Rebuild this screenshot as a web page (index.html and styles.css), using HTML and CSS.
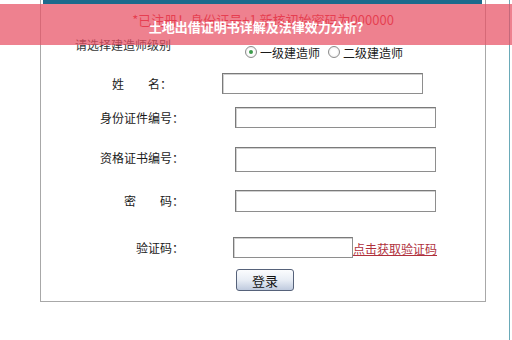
FILE: index.html
```html
<!DOCTYPE html>
<html lang="zh-CN">
<head>
<meta charset="utf-8">
<title>土地出借证明书详解及法律效力分析?</title>
<link rel="stylesheet" href="styles.css">
</head>
<body>
<div class="page">
  <div class="frame">
    <div class="topbar"></div>
    <div class="notice">*已注册！身份证号+1 新核初始密码为000000</div>
    <div class="level-row">
      <span class="level-label">请选择建造师级别</span>
      <div class="radios">
        <span class="radio checked"></span><span class="radio-text">一级建造师</span>
        <span class="radio"></span><span class="radio-text">二级建造师</span>
      </div>
    </div>
    <div class="row row-name">
      <span class="label label-name">姓　　名：</span>
      <span class="field field-name"></span>
    </div>
    <div class="row row-id">
      <span class="label">身份证件编号：</span>
      <span class="field"></span>
    </div>
    <div class="row row-cert">
      <span class="label label-cert">资格证书编号：</span>
      <span class="field field-cert"></span>
    </div>
    <div class="row row-pwd">
      <span class="label">密　　码：</span>
      <span class="field field-pwd"></span>
    </div>
    <div class="row row-code">
      <span class="label">验证码：</span>
      <span class="field field-code"></span>
      <a class="code-link" href="#">点击获取验证码</a>
    </div>
    <div class="row row-btn">
      <span class="btn">登录</span>
    </div>
  </div>
  <div class="banner">
    <span class="banner-title">土地出借证明书详解及法律效力分析?</span>
  </div>
</div>
</body>
</html>
```

FILE: styles.css
```css
html, body {
  margin: 0;
  padding: 0;
  background: #ffffff;
}

body {
  width: 512px;
  height: 340px;
  overflow: hidden;
  font-family: "Noto Sans CJK SC", "Noto Sans", sans-serif;
  font-size: 12px;
  color: #1a1a1a;
}

.page {
  position: relative;
  width: 509px;
  height: 340px;
  border-right: 1px solid #6aaab8;
}

.frame {
  margin-left: 40px;
  width: 446px;
  box-sizing: border-box;
  border-left: 1px solid #a8a8a8;
  border-right: 1px solid #a8a8a8;
  border-bottom: 1px solid #a8a8a8;
  padding-bottom: 10px;
}

.topbar {
  height: 4px;
  margin: 0 3px 0 2px;
  background: #1c6a8c;
}

.notice {
  margin-top: 8px;
  height: 16px;
  line-height: 16px;
  text-align: center;
  font-size: 13px;
  color: #e01020;
}

.level-row {
  display: flex;
  align-items: flex-start;
  margin-top: 9px;
  height: 23px;
}

.level-label {
  margin-left: 34px;
  width: 170px;
  flex: none;
  line-height: 16px;
  color: #333333;
}

.radios {
  display: flex;
  align-items: center;
  margin-top: 7px;
  height: 16px;
}

.radio {
  width: 12px;
  height: 12px;
  box-sizing: border-box;
  border: 1px solid #8c8c8c;
  border-radius: 50%;
  background: radial-gradient(circle, #ffffff 40%, #e4e4e4 100%);
  margin-right: 3px;
  position: relative;
  flex: none;
}

.radio.checked::after {
  content: "";
  position: absolute;
  left: 3px;
  top: 3px;
  width: 4px;
  height: 4px;
  border-radius: 50%;
  background: #3c9a4a;
}

.radio-text {
  margin-right: 8px;
  color: #1a1a1a;
}

.row {
  display: flex;
  align-items: center;
}

.label {
  width: 143px;
  text-align: right;
  flex: none;
  line-height: 16px;
}

.label-name {
  width: 131px;
}

.label-cert {
  position: relative;
  top: -2px;
}

.field {
  display: block;
  width: 201px;
  height: 21px;
  box-sizing: border-box;
  margin-left: 51px;
  border: 1px solid #8e8e8e;
  border-top-color: #7a7a7a;
  border-left-color: #7a7a7a;
  box-shadow: inset 1px 1px 0 #d0d0d0;
  background: #ffffff;
}

.row-name { margin-top: 13px; }
.field-name { margin-left: 50px; }

.row-id { margin-top: 13px; }

.row-cert { margin-top: 19px; }
.field-cert { height: 25px; }

.row-pwd { margin-top: 18px; }
.field-pwd { height: 22px; }

.row-code { margin-top: 25px; align-items: flex-end; }
.row-code .label { align-self: center; }
.field-code {
  width: 120px;
  margin-left: 49px;
}

.code-link {
  color: #b0303c;
  text-decoration: underline;
  line-height: 16px;
  margin-bottom: 1px;
}

.row-btn {
  margin-top: 11px;
}

.btn {
  display: flex;
  align-items: center;
  justify-content: center;
  margin-left: 195px;
  width: 58px;
  height: 22px;
  box-sizing: border-box;
  border: 1px solid #56627a;
  border-radius: 3px;
  background: linear-gradient(#fbfcfe 0%, #e8edf5 50%, #bfcade 100%);
  font-size: 13px;
  color: #111111;
}

.banner {
  position: absolute;
  top: 4px;
  left: 0;
  width: 512px;
  height: 41px;
  background: rgba(232, 80, 100, 0.72);
  display: flex;
  justify-content: center;
  align-items: center;
  padding-top: 5px;
  box-sizing: border-box;
}

.banner-title {
  color: #ffffff;
  font-weight: bold;
  font-size: 13px;
  line-height: 16px;
}
```
